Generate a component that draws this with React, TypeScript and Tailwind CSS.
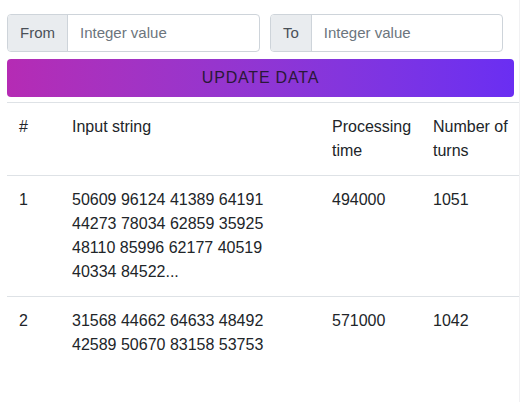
import React from "react";

const rows = [
  { id: 1, input: "50609 96124 41389 64191 44273 78034 62859 35925 48110 85996 62177 40519 40334 84522...", time: "494000", turns: "1051", last: false },
  { id: 2, input: "31568 44662 64633 48492 42589 50670 83158 53753", time: "571000", turns: "1042", last: true },
];

export default function App() {
  return (
    <div className="w-[530px] h-[402px] overflow-hidden bg-white text-[#212529]" style={{ fontFamily: "'Liberation Sans', Arial, sans-serif" }}>
      <div className="w-[520px] h-full border-r border-[#f1f1f3] pl-[7px] pt-[14px]">
        <div className="flex gap-[10px] w-[507px]">
          <div className="flex w-[253px] h-[38px] border border-[#ced4da] rounded-[4px] overflow-hidden">
            <div className="flex items-center px-[12px] bg-[#e9ecef] border-r border-[#ced4da] text-[15px] text-[#495057]">From</div>
            <input className="flex-1 min-w-0 px-[12px] text-[15px] outline-none placeholder:text-[#6c757d]" placeholder="Integer value" />
          </div>
          <div className="flex w-[233px] h-[38px] border border-[#ced4da] rounded-[4px] overflow-hidden">
            <div className="flex items-center px-[12px] bg-[#e9ecef] border-r border-[#ced4da] text-[15px] text-[#495057]">To</div>
            <input className="flex-1 min-w-0 px-[12px] text-[15px] outline-none placeholder:text-[#6c757d]" placeholder="Integer value" />
          </div>
        </div>
        <button className="mt-[7px] w-[507px] h-[38px] rounded-[4px] bg-gradient-to-r from-[#b52bb4] to-[#6a2ef2] text-[16px] tracking-[0.8px] text-[#2a1838]">
          UPDATE DATA
        </button>
        <table className="mt-[5px] w-[512px] table-fixed border-collapse text-[16px] leading-[24px] text-left">
          <colgroup>
            <col className="w-[53px]" />
            <col className="w-[260px]" />
            <col className="w-[101px]" />
            <col className="w-[98px]" />
          </colgroup>
          <thead>
            <tr className="border-t border-b border-[#dee2e6] align-top">
              <th className="font-normal p-[12px]">#</th>
              <th className="font-normal p-[12px]">Input string</th>
              <th className="font-normal p-[12px]">Processing time</th>
              <th className="font-normal py-[12px] pl-[12px] pr-[4px]">Number of turns</th>
            </tr>
          </thead>
          <tbody>
            {rows.map((r) => (
              <tr key={r.id} className={r.last ? "align-top" : "border-b border-[#dee2e6] align-top"}>
                <td className="p-[12px]">{r.id}</td>
                <td className="p-[12px]">{r.input}</td>
                <td className="p-[12px]">{r.time}</td>
                <td className="py-[12px] pl-[12px] pr-[4px]">{r.turns}</td>
              </tr>
            ))}
          </tbody>
        </table>
      </div>
    </div>
  );
}
